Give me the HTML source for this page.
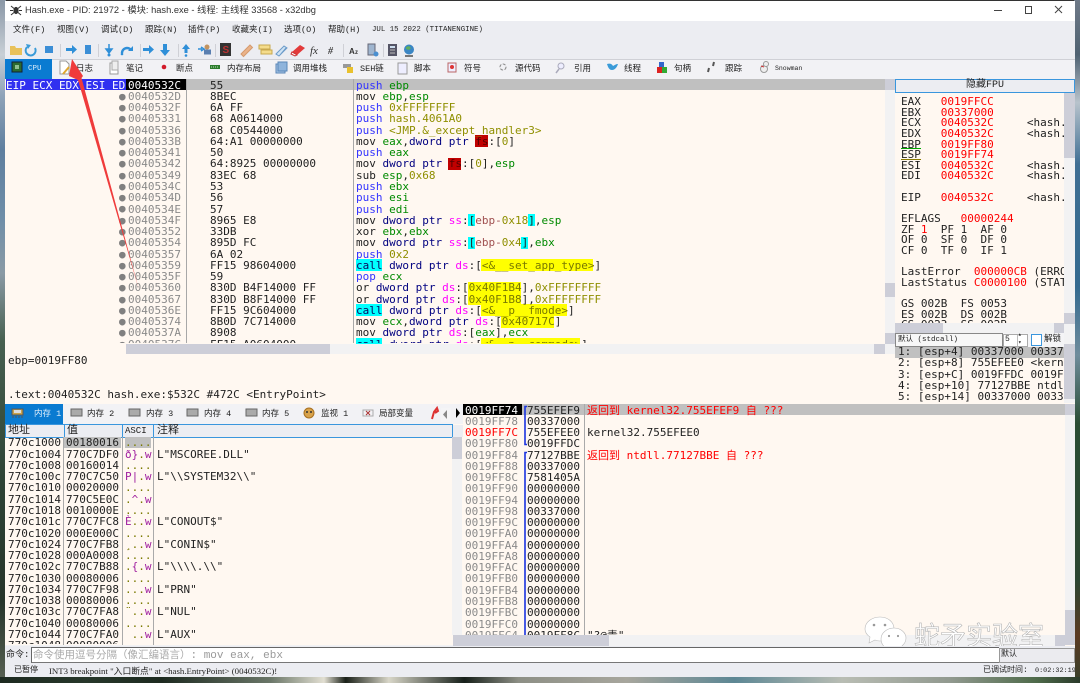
<!DOCTYPE html>
<html><head><meta charset="utf-8"><style>
html,body{margin:0;padding:0}
body{width:1080px;height:683px;position:relative;overflow:hidden;background:#333}
div,pre,span.a{position:absolute}
pre{margin:0;font:11px/11.27px "DejaVu Sans Mono","Liberation Mono",monospace;color:#222;white-space:pre}
.z{font:8.5px/12px "Liberation Mono","WenQuanYi Zen Hei","Noto Sans CJK SC",monospace;color:#222;white-space:pre}
.m{color:#33f}.r{color:#008a00}.h{color:#8f8f00}.n{color:#000080}.s{color:#f0f}.l{color:#999}
.p{color:#a020a0}.o{color:#7a7a00}.e{color:#f00}
.g{background:#c0c0c0}.c{background:#0ff}.y{background:#ff0}.d{background:#c00000}
.t{background:#f2f2f3}.u{background:#cdced8}
</style></head><body>
<!-- wallpaper -->
<div style="left:0;top:0;width:6px;height:683px;background:linear-gradient(#8a97a6 0,#c8cfd6 8%,#8fa3b8 14%,#5f7f9f 22%,#6f8ea8 32%,#8a9aa5 40%,#47604f 50%,#2e4436 70%,#26352a 88%,#5a6355 100%)"></div>
<div style="left:1074px;top:0;width:6px;height:683px;background:linear-gradient(#6f7a88 0,#4f6272 8%,#b8c3cc 15%,#3f6f94 24%,#346a90 42%,#6f8c9c 52%,#2a4d34 62%,#2c4632 85%,#5b3a22 93%,#37402c 100%)"></div>
<div style="left:0;top:677px;width:1080px;height:6px;background:linear-gradient(90deg,#1d2a20 0,#27372a 8%,#1d2a20 15%,#6a7668 25%,#e2dfd2 30%,#1a2018 32%,#d8d6c8 36%,#17201a 43%,#8d8f85 48%,#a7a69d 58%,#5d8794 68%,#b9bdb4 78%,#91998f 88%,#4e6a4a 96%,#2a3a2a 100%)"></div>
<!-- window -->
<div style="left:5px;top:1px;width:1070px;height:676px;background:#fff8f1;overflow:hidden;filter:blur(.3px)">
<div id="w" style="left:-5px;top:-1px;width:1080px;height:683px">
<!-- title -->
<div style="left:5px;top:0;width:1070px;height:21px;background:#fff"></div>
<svg style="position:absolute;left:10px;top:4px" width="12" height="12" viewBox="0 0 12 12"><ellipse cx="6" cy="6.5" rx="2.6" ry="3.6" fill="#333"/><path d="M1 2l3 2.500M11 2L8 4.500M0 6.500h3M12 6.500H9M1 11l3-2.500M11 11L8 8.500" stroke="#333" fill="none"/></svg>
<div style="left:25px;top:4px;font:9.3px/13px 'Liberation Sans','Noto Sans CJK SC',sans-serif;color:#333;white-space:pre">Hash.exe - PID: 21972 - 模块: hash.exe - 线程: 主线程 33568 - x32dbg</div>
<svg style="position:absolute;left:990px;top:3px" width="80" height="14" viewBox="0 0 80 14"><path d="M4 7.500h8" stroke="#444"/><rect x="35.500" y="3.500" width="6" height="7" fill="none" stroke="#444"/><path d="M65 3l7 7M72 3l-7 7" stroke="#444"/></svg>
<!-- menu -->
<div style="left:5px;top:21px;width:1070px;height:20px;background:#ecedf2;border-bottom:1px solid #f5f5f7"></div>
<div class="z" style="left:13px;top:24px">文件(F)</div><div class="z" style="left:57px;top:24px">视图(V)</div><div class="z" style="left:101px;top:24px">调试(D)</div><div class="z" style="left:145px;top:24px">跟踪(N)</div><div class="z" style="left:188px;top:24px">插件(P)</div><div class="z" style="left:232px;top:24px">收藏夹(I)</div><div class="z" style="left:284px;top:24px">选项(O)</div><div class="z" style="left:328px;top:24px">帮助(H)</div>
<div class="z" style="left:372px;top:24px;font-size:7.4px">JUL 15 2022 (TITANENGINE)</div>
<!-- toolbar -->
<div style="left:5px;top:41px;width:1070px;height:18px;background:#ecedf2;border-bottom:1px solid #cfd0d6"></div>
<svg style="position:absolute;left:0;top:40px" width="430" height="20" viewBox="0 0 430 20">
<path d="M10 6h5l1 2h6v7H10z" fill="#e8c15a"/><path d="M27 7a5 5 0 1 0 8 1" stroke="#3a9bd8" stroke-width="2" fill="none"/><path d="M26 4l5 1-3 4z" fill="#3a9bd8"/><rect x="45" y="6" width="8" height="7" fill="#3b8ed6"/>
<path d="M60.500 4v13M98.500 4v13M140.500 4v13M178.500 4v13M215.500 4v13M343.500 4v13M383.500 4v13" stroke="#cfd0d6"/>
<path d="M66 8h6V5l5 4.500-5 4.500v-3h-6z" fill="#2f8fd8"/><rect x="85" y="5" width="6" height="9" fill="#3b8ed6"/>
<path d="M109 4v7M106 9l3 4 3-4z" stroke="#2f8fd8" fill="#2f8fd8" stroke-width="1.500"/><circle cx="109" cy="15" r="1.500" fill="#2f8fd8"/>
<path d="M122 13a5 5 0 0 1 9-3" stroke="#2f8fd8" stroke-width="2.500" fill="none"/><path d="M128 11h5v-5z" fill="#2f8fd8"/><circle cx="122" cy="14" r="1.300" fill="#2f8fd8"/>
<path d="M143 8h6V5l5 4.500-5 4.500v-3h-6z" fill="#2f8fd8"/><path d="M163 4h4v6h3l-5 6-5-6h3z" fill="#2f8fd8"/>
<path d="M186 4l4 5h-2.500v4h-3V9H182z" fill="#2f8fd8"/><circle cx="186" cy="15.500" r="1.300" fill="#2f8fd8"/>
<path d="M198 9h4M201 7l3 2-3 2" stroke="#2f8fd8" stroke-width="1.500" fill="none"/><circle cx="207" cy="7" r="2.500" fill="#c29360"/><rect x="204" y="9.500" width="7" height="5" fill="#5a7fb0"/>
<rect x="220" y="3" width="11" height="13" fill="#333"/><text x="222.500" y="13" font-size="10" font-family="Liberation Sans" font-weight="bold" fill="#b33">S</text>
<path d="M241 14l9-9 2.500 2.500-9 9z" fill="#eab38a" stroke="#d59a6e"/><rect x="259" y="5" width="11" height="4" fill="#f4dc8c" stroke="#c9a94f"/><rect x="261" y="10" width="11" height="4" fill="#f4dc8c" stroke="#c9a94f"/>
<path d="M276 14l8-8 3 2-8 8zM280 15l6-7" fill="#cfe3f4" stroke="#6b9bc9"/><path d="M292 12l8-7 5 3-8 7z" fill="#e23a3a"/><path d="M292 12l5 3-2 1-4-2z" fill="#fff" stroke="#c33"/>
<text x="310" y="14" font-size="11" font-family="Liberation Serif" font-style="italic" fill="#333">fx</text><text x="328" y="14" font-size="10" font-family="Liberation Serif" font-style="italic" font-weight="bold" fill="#444">#</text>
<text x="349" y="14" font-size="8" font-family="Liberation Sans" font-weight="bold" fill="#333">A</text><text x="355" y="14" font-size="6" font-family="Liberation Sans" font-weight="bold" fill="#333">z</text>
<rect x="368" y="4" width="7" height="11" fill="#9fb5cf" stroke="#667"/><circle cx="376" cy="14" r="2.500" fill="#4a8fd0"/>
<rect x="388" y="4" width="9" height="12" fill="#556" /><rect x="390" y="6" width="5" height="2" fill="#cde"/><path d="M390 10h5M390 13h5" stroke="#bbb"/>
<circle cx="409" cy="9.500" r="5" fill="#3b86c4"/><path d="M406 7l3-1 2 2-2 2-3-1z" fill="#5fae5f"/><rect x="405" y="15" width="8" height="2" fill="#777"/>
</svg>
<!-- main tabs -->
<div style="left:5px;top:60px;width:1070px;height:19px;background:#f2f2f5"></div>
<div style="left:5px;top:59px;width:47px;height:20px;background:#0a7bd1"></div>
<svg style="position:absolute;left:0;top:59px" width="800" height="20" viewBox="0 0 800 20">
<rect x="12" y="3" width="10" height="10" fill="#2c6b2f" stroke="#123"/><rect x="15" y="6" width="4" height="4" fill="#8fc08f"/>
<path d="M60 2h6l3 3v10h-9z" fill="#fff" stroke="#999"/><path d="M63 15l6-7" stroke="#e0a830" stroke-width="2"/>
<rect x="110" y="4" width="8" height="11" fill="#fff" stroke="#999"/><rect x="112" y="2" width="6" height="9" fill="#eee" stroke="#aaa"/>
<circle cx="164" cy="8" r="2.300" fill="#d21b2b"/><rect x="210" y="6" width="10" height="4" fill="#2d7d2d"/><path d="M211 8h8" stroke="#bfe3bf" stroke-dasharray="1 1"/>
<rect x="276" y="5" width="9" height="9" fill="#a8c6e6" stroke="#5a87b8"/><rect x="278" y="3" width="9" height="9" fill="#8fb4dc" stroke="#5a87b8"/>
<rect x="343" y="5" width="8" height="4" fill="#999"/><rect x="347" y="8" width="6" height="6" fill="#e9c12d"/>
<rect x="398" y="4" width="9" height="11" fill="#eef" stroke="#999"/>
<rect x="448" y="4" width="8" height="9" fill="#eef" stroke="#b66"/><circle cx="452" cy="8" r="2" fill="#d33"/>
<circle cx="503" cy="8" r="3" fill="none" stroke="#888" stroke-dasharray="3 1.500"/><circle cx="561" cy="7" r="3" fill="#eef" stroke="#aab"/><path d="M559 10l-3 4" stroke="#aab" stroke-width="1.500"/>
<path d="M607 5c3-1 5 0 6 2 2-1 3-2 5-2-1 3-3 6-6 6-3 0-4-3-5-6z" fill="#3a9bd8"/>
<rect x="657" y="8" width="5" height="6" fill="#d22"/><rect x="662" y="8" width="5" height="6" fill="#3a3"/><rect x="659" y="3" width="5" height="5" fill="#36c"/>
<path d="M708 13l1-4M713 7l1-4" stroke="#555" stroke-width="2"/>
<circle cx="764" cy="10" r="3.500" fill="#eee" stroke="#999"/><circle cx="766" cy="5" r="2.500" fill="#eee" stroke="#999"/><path d="M761 7l3 1" stroke="#c33"/>
</svg>
<div class="z" style="left:28px;top:63px;color:#dfeefa;font-size:7.5px">CPU</div>
<div class="z" style="left:76px;top:63px">日志</div><div class="z" style="left:126px;top:63px">笔记</div><div class="z" style="left:176px;top:63px">断点</div><div class="z" style="left:227px;top:63px">内存布局</div><div class="z" style="left:293px;top:63px">调用堆栈</div><div class="z" style="left:360px;top:63px">SEH链</div><div class="z" style="left:414px;top:63px">脚本</div><div class="z" style="left:464px;top:63px">符号</div><div class="z" style="left:515px;top:63px">源代码</div><div class="z" style="left:574px;top:63px">引用</div><div class="z" style="left:624px;top:63px">线程</div><div class="z" style="left:674px;top:63px">句柄</div><div class="z" style="left:725px;top:63px">跟踪</div><div class="z" style="left:775px;top:63px;font-size:6.500px">Snowman</div>
<!-- disasm -->
<div class="g" style="left:186px;top:79px;width:699px;height:11px"></div>
<div style="left:6px;top:79px;width:120px;height:11px;background:#3030f0"></div>
<div style="left:126px;top:79px;width:60px;height:11px;background:#000"></div>
<div style="left:186px;top:79px;width:1px;height:264px;background:#a8a8a8"></div>
<div style="left:353px;top:79px;width:1px;height:264px;background:#a8a8a8"></div>
<pre style="left:6px;top:79.600px;color:#fff;width:120px;overflow:hidden">EIP ECX EDX ESI EDI</pre>
<div class="d" style="left:475px;top:135px;width:13px;height:12px"></div>
<div class="d" style="left:448px;top:158px;width:13px;height:12px"></div>
<div class="c" style="left:468px;top:214px;width:7px;height:12px"></div><div class="c" style="left:528px;top:214px;width:7px;height:12px"></div>
<div class="c" style="left:468px;top:237px;width:7px;height:12px"></div><div class="c" style="left:521px;top:237px;width:7px;height:12px"></div>
<div class="c" style="left:356px;top:259px;width:26px;height:12px"></div><div class="y" style="left:481px;top:259px;width:112px;height:12px"></div>
<div class="y" style="left:468px;top:282px;width:53px;height:12px"></div><div class="y" style="left:468px;top:293px;width:53px;height:12px"></div>
<div class="c" style="left:356px;top:304px;width:26px;height:12px"></div><div class="y" style="left:481px;top:304px;width:86px;height:12px"></div>
<div class="y" style="left:501px;top:316px;width:53px;height:12px"></div>
<div class="c" style="left:356px;top:338px;width:26px;height:12px"></div><div class="y" style="left:481px;top:338px;width:99px;height:12px"></div>
<pre style="left:128px;top:79.600px;color:#8a8a8a;height:263px;overflow:hidden"><span style="color:#fff">0040532C</span>
0040532D
0040532F
00405331
00405336
0040533B
00405341
00405342
00405349
0040534C
0040534D
0040534E
0040534F
00405352
00405354
00405357
00405359
0040535F
00405360
00405367
0040536E
00405374
0040537A
0040537C</pre>
<pre style="left:119px;top:90.800px;color:#808080;height:252px;overflow:hidden">●
●
●
●
●
●
●
●
●
●
●
●
●
●
●
●
●
●
●
●
●
●
●</pre>
<pre style="left:210px;top:79.600px;height:263px;overflow:hidden">55
8BEC
6A FF
68 A0614000
68 C0544000
64:A1 00000000
50
64:8925 00000000
83EC 68
53
56
57
8965 E8
33DB
895D FC
6A 02
FF15 98604000
59
830D B4F14000 FF
830D B8F14000 FF
FF15 9C604000
8B0D 7C714000
8908
FF15 A0604000</pre>
<pre style="left:356px;top:79.600px;height:263px;overflow:hidden"><span class="m">push</span> <span class="r">ebp</span>
mov <span class="r">ebp</span>,<span class="r">esp</span>
<span class="m">push</span> <span class="h">0xFFFFFFFF</span>
<span class="m">push</span> <span class="h">hash.4061A0</span>
<span class="m">push</span> <span class="h">&lt;JMP.&amp;_except_handler3&gt;</span>
mov <span class="r">eax</span>,<span class="n">dword ptr</span> <span style="color:#500">fs</span>:[<span class="h">0</span>]
<span class="m">push</span> <span class="r">eax</span>
mov <span class="n">dword ptr</span> <span style="color:#500">fs</span>:[<span class="h">0</span>],<span class="r">esp</span>
sub <span class="r">esp</span>,<span class="h">0x68</span>
<span class="m">push</span> <span class="r">ebx</span>
<span class="m">push</span> <span class="r">esi</span>
<span class="m">push</span> <span class="r">edi</span>
mov <span class="n">dword ptr</span> <span class="s">ss</span>:[<span style="color:#a05050">ebp-</span><span class="h">0x18</span>],<span class="r">esp</span>
xor <span class="r">ebx</span>,<span class="r">ebx</span>
mov <span class="n">dword ptr</span> <span class="s">ss</span>:[<span style="color:#a05050">ebp-</span><span class="h">0x4</span>],<span class="r">ebx</span>
<span class="m">push</span> <span class="h">0x2</span>
<span style="color:#0a0a60">call</span> <span class="n">dword ptr</span> <span class="s">ds</span>:[<span class="o">&lt;&amp;__set_app_type&gt;</span>]
<span class="m">pop</span> <span class="r">ecx</span>
or <span class="n">dword ptr</span> <span class="s">ds</span>:[<span class="o">0x40F1B4</span>],<span class="h">0xFFFFFFFF</span>
or <span class="n">dword ptr</span> <span class="s">ds</span>:[<span class="o">0x40F1B8</span>],<span class="h">0xFFFFFFFF</span>
<span style="color:#0a0a60">call</span> <span class="n">dword ptr</span> <span class="s">ds</span>:[<span class="o">&lt;&amp;__p__fmode&gt;</span>]
mov <span class="r">ecx</span>,<span class="n">dword ptr</span> <span class="s">ds</span>:[<span class="o">0x40717C</span>]
mov <span class="n">dword ptr</span> <span class="s">ds</span>:[<span class="r">eax</span>],<span class="r">ecx</span>
<span style="color:#0a0a60">call</span> <span class="n">dword ptr</span> <span class="s">ds</span>:[<span class="o">&lt;&amp;__p__commode&gt;</span>]</pre>
<!-- disasm scroll -->
<div class="t" style="left:885px;top:79px;width:10px;height:264px"></div>
<div class="u" style="left:885px;top:283px;width:10px;height:14px"></div>
<div class="u" style="left:885px;top:79px;width:10px;height:11px"></div>
<div class="t" style="left:126px;top:344px;width:769px;height:10px"></div>
<div class="u" style="left:126px;top:344px;width:204px;height:10px"></div>
<div class="u" style="left:874px;top:344px;width:11px;height:10px"></div>
<pre style="left:8px;top:355px">ebp=0019FF80</pre>
<pre style="left:8px;top:389px">.text:0040532C hash.exe:$532C #472C &lt;EntryPoint&gt;</pre>
<!-- registers -->
<div style="left:895px;top:79px;width:180px;height:14px;background:#ecedf2;border:1px solid #3a96dd;box-sizing:border-box"></div>
<div class="z" style="left:895px;top:80px;width:180px;text-align:center;font-size:10px">隐藏FPU</div>
<pre style="left:901px;top:97px;line-height:10.62px;width:163px;height:226px;overflow:hidden">EAX   <span class="e">0019FFCC</span>
EBX   <span class="e">00337000</span>
ECX   <span class="e">0040532C</span>     &lt;hash.EntryPoint&gt;
EDX   <span class="e">0040532C</span>     &lt;hash.EntryPoint&gt;
EBP   <span class="e">0019FF80</span>
ESP   <span class="e">0019FF74</span>
ESI   <span class="e">0040532C</span>     &lt;hash.EntryPoint&gt;
EDI   <span class="e">0040532C</span>     &lt;hash.EntryPoint&gt;

EIP   <span class="e">0040532C</span>     &lt;hash.EntryPoint&gt;

EFLAGS   <span class="e">00000244</span>
ZF <span class="e">1</span>  PF 1  AF 0
OF 0  SF 0  DF 0
CF 0  TF 0  IF 1

LastError  <span class="e">000000CB</span> (ERROR_PROC_NOT_FOUND)
LastStatus <span class="e">C0000100</span> (STATUS_VARIABLE)

GS 002B  FS 0053
ES 002B  DS 002B
CS 0023  SS 002B</pre>
<div style="left:901px;top:148px;width:20px;height:1px;background:#0a0"></div>
<div style="left:901px;top:159px;width:20px;height:1px;background:#8a7a00"></div>
<div class="t" style="left:1064px;top:93px;width:11px;height:251px"></div>
<div class="u" style="left:1064px;top:93px;width:11px;height:65px"></div>
<div class="u" style="left:1064px;top:313px;width:11px;height:11px"></div>
<div class="t" style="left:895px;top:323px;width:169px;height:10px"></div>
<div class="u" style="left:895px;top:323px;width:48px;height:10px"></div>
<div class="u" style="left:1054px;top:323px;width:10px;height:10px"></div>
<div class="u" style="left:885px;top:333px;width:10px;height:11px"></div>
<!-- call combo -->
<div style="left:895px;top:333px;width:169px;height:14px;background:#f4f4f6"></div>
<div style="left:895px;top:333px;width:106px;height:12px;background:#f7f7f7;border:1px solid #888;box-sizing:content-box"></div>
<div class="z" style="left:898px;top:334px;font-size:7.500px">默认 (stdcall)</div>
<div style="left:1003px;top:334px;width:23px;height:11px;background:#fff;border:1px solid #aaa"></div>
<div class="z" style="left:1005px;top:334px;font-size:8px">5</div>
<div style="left:1017px;top:335px;width:1px;height:11px;background:#bbb"></div>
<div class="z" style="left:1018px;top:331px;font-size:6px;line-height:8px">▴
▾</div>
<div style="left:1031px;top:334px;width:9px;height:10px;background:#fff;border:1px solid #3a96dd"></div>
<div class="z" style="left:1044px;top:333px">解锁</div>
<div class="g" style="left:895px;top:347px;width:169px;height:11px"></div>
<pre style="left:898px;top:346px;width:166px;height:57px;overflow:hidden">1: [esp+4] 00337000 00337000
2: [esp+8] 755EFEE0 &lt;kernel32
3: [esp+C] 0019FFDC 0019FFDC
4: [esp+10] 77127BBE ntdll.77
5: [esp+14] 00337000 00337000</pre>
<div class="t" style="left:1064px;top:344px;width:11px;height:59px"></div>
<div class="u" style="left:1064px;top:344px;width:11px;height:55px"></div>
<!-- memory tabs -->
<div style="left:5px;top:404px;width:458px;height:20px;background:#f2f2f5"></div>
<div style="left:5px;top:404px;width:58px;height:20px;background:#0a7bd1"></div>
<svg style="position:absolute;left:0;top:404px" width="463" height="20" viewBox="0 0 463 20">
<g><rect x="12" y="5" width="11" height="6" fill="#c9a24a" stroke="#555"/><rect x="14" y="6" width="7" height="3" fill="#ddd"/><path d="M12 13h11" stroke="#555" stroke-dasharray="2 1"/></g>
<g fill="#aaa" stroke="#666"><rect x="71" y="5" width="11" height="7"/><rect x="129" y="5" width="11" height="7"/><rect x="187" y="5" width="11" height="7"/><rect x="246" y="5" width="11" height="7"/></g>
<circle cx="309" cy="9" r="5" fill="#d8a24a" stroke="#a87020"/><circle cx="307" cy="8" r="1" fill="#333"/><circle cx="311" cy="8" r="1" fill="#333"/>
<rect x="363" y="6" width="10" height="6" fill="none" stroke="#aaa"/><path d="M366 7l4 4M370 7l-4 4" stroke="#a33"/>
<path d="M432 15l2-7 3-4 1 3-3 2" stroke="#d33" stroke-width="2" fill="none"/>
<rect x="441" y="4" width="10" height="14" fill="#f4f4f6"/><path d="M447 6v9l-4-4.500z" fill="#888"/></svg>
<div class="z" style="left:34px;top:408px;color:#dfeefa">内存 1</div><div class="z" style="left:87px;top:408px">内存 2</div><div class="z" style="left:146px;top:408px">内存 3</div><div class="z" style="left:204px;top:408px">内存 4</div><div class="z" style="left:262px;top:408px">内存 5</div><div class="z" style="left:321px;top:408px">监视 1</div><div class="z" style="left:379px;top:408px">局部变量</div>
<!-- memory table -->
<div style="left:5px;top:425px;width:458px;height:12px;background:#ecedf2"></div>
<div style="left:5px;top:424px;width:58px;height:12px;border:1px solid #3a96dd;box-sizing:content-box"></div>
<div style="left:64px;top:424px;width:57px;height:12px;border:1px solid #3a96dd"></div>
<div style="left:122px;top:424px;width:30px;height:12px;border:1px solid #3a96dd"></div>
<div style="left:153px;top:424px;width:298px;height:12px;border:1px solid #3a96dd"></div>
<div class="z" style="left:8px;top:425px;font-size:11px">地址</div><div class="z" style="left:67px;top:425px;font-size:11px">值</div><div class="z" style="left:125px;top:425px;font-size:9px">ASCI</div><div class="z" style="left:157px;top:425px;font-size:11px">注释</div>
<div class="g" style="left:64px;top:437px;width:57px;height:11px"></div>
<div class="g" style="left:125px;top:437px;width:26px;height:11px"></div>
<div style="left:63px;top:437px;width:1px;height:208px;background:#aaa"></div>
<div style="left:122px;top:437px;width:1px;height:208px;background:#aaa"></div>
<div style="left:153px;top:437px;width:1px;height:208px;background:#aaa"></div>
<pre style="left:8px;top:437.400px;height:207px;overflow:hidden">770c1000
770c1004
770c1008
770c100c
770c1010
770c1014
770c1018
770c101c
770c1020
770c1024
770c1028
770c102c
770c1030
770c1034
770c1038
770c103c
770c1040
770c1044
770c1048</pre>
<pre style="left:66px;top:437.400px;height:207px;overflow:hidden">00180016
770C7DF0
00160014
770C7C50
00020000
770C5E0C
0010000E
770C7FC8
000E000C
770C7FB8
000A0008
770C7B88
00080006
770C7F98
00080006
770C7FA8
00080006
770C7FA0
00080006</pre>
<pre style="left:125px;top:437.400px;color:#7a7a00;height:207px;overflow:hidden">....
<span class="p">ð}</span>.<span class="p">w</span>
....
<span class="p">P|</span>.<span class="p">w</span>
....
.<span class="p">^</span>.<span class="p">w</span>
....
<span class="p">È</span>..<span class="p">w</span>
....
¸..<span class="p">w</span>
....
.<span class="p">{</span>.<span class="p">w</span>
....
...<span class="p">w</span>
....
¨..<span class="p">w</span>
....
 ..<span class="p">w</span></pre>
<pre style="left:157px;top:437.400px">

L"MSCOREE.DLL"

L"\\SYSTEM32\\"



L"CONOUT$"

L"CONIN$"

L"\\\\.\\"

L"PRN"

L"NUL"

L"AUX"</pre>
<div class="t" style="left:452px;top:437px;width:10px;height:198px"></div>
<div class="u" style="left:452px;top:437px;width:10px;height:11px"></div>
<div class="u" style="left:452px;top:445px;width:10px;height:14px"></div>
<div class="t" style="left:5px;top:645px;width:458px;height:2px"></div>
<!-- stack -->
<div class="g" style="left:522px;top:404px;width:543px;height:11px"></div>
<div style="left:463px;top:404px;width:59px;height:11px;background:#000"></div>
<div style="left:584px;top:404px;width:1px;height:231px;background:#aaa"></div>
<div style="left:452px;top:404px;width:11px;height:20px;background:#f2f2f5"></div>
<div style="left:456px;top:408px;width:0;height:0;border-left:4px solid #000;border-top:5px solid transparent;border-bottom:5px solid transparent"></div>
<pre style="left:465px;top:404.500px;color:#8a8a8a;height:231px;overflow:hidden"><span style="color:#fff">0019FF74</span>
0019FF78
<span class="e">0019FF7C</span>
0019FF80
0019FF84
0019FF88
0019FF8C
0019FF90
0019FF94
0019FF98
0019FF9C
0019FFA0
0019FFA4
0019FFA8
0019FFAC
0019FFB0
0019FFB4
0019FFB8
0019FFBC
0019FFC0
0019FFC4</pre>
<svg style="position:absolute;left:523px;top:404px" width="5" height="232" viewBox="0 0 5 232"><path d="M4 2.500H2v38h2M4 48.500H2V231" stroke="#1a34e0" stroke-width="1.600" fill="none"/></svg>
<pre style="left:527px;top:404.500px;height:231px;overflow:hidden">755EFEF9
00337000
755EFEE0
0019FFDC
77127BBE
00337000
7581405A
00000000
00000000
00337000
00000000
00000000
00000000
00000000
00000000
00000000
00000000
00000000
00000000
00000000
0019FF8C</pre>
<pre style="left:587px;top:404.500px;height:231px;overflow:hidden;font-family:'DejaVu Sans Mono','Noto Sans CJK SC',monospace"><span class="e">返回到 kernel32.755EFEF9 自 ???</span>

kernel32.755EFEE0

<span class="e">返回到 ntdll.77127BBE 自 ???</span>















"?@青"</pre>
<div class="t" style="left:1065px;top:404px;width:10px;height:241px"></div>
<div class="u" style="left:1065px;top:404px;width:10px;height:11px"></div>
<div class="u" style="left:1065px;top:610px;width:10px;height:23px"></div>
<div class="u" style="left:1065px;top:633px;width:10px;height:12px"></div>
<div class="t" style="left:453px;top:635px;width:612px;height:11px"></div>
<div class="u" style="left:453px;top:635px;width:156px;height:11px"></div>
<div class="u" style="left:1055px;top:635px;width:10px;height:11px"></div>
<!-- watermark -->
<svg style="position:absolute;left:864px;top:615px" width="44" height="42" viewBox="0 0 44 42"><path d="M16 2c8 0 14 5 14 12 0 7-6 12-14 12-2 0-3 0-5-1l-6 3 1-6C3 20 1 17 1 14 1 7 8 2 16 2z" fill="#fff" stroke="#bbb" stroke-width=".6"/><path d="M30 13c7 0 12 5 12 10 0 4-2 6-4 8l1 6-6-3c-1 1-2 1-4 1-7 0-12-5-12-11s6-11 13-11z" fill="#fff" stroke="#bbb" stroke-width=".6"/><circle cx="10" cy="10" r="1.300" fill="#999"/><circle cx="21" cy="10" r="1.300" fill="#999"/><circle cx="25" cy="21" r="1.100" fill="#999"/><circle cx="34" cy="21" r="1.100" fill="#999"/></svg>
<div style="left:914px;top:620px;font:26px/30px 'Noto Sans CJK SC','WenQuanYi Zen Hei',sans-serif;color:#fff;-webkit-text-stroke:.6px #b5b5b5;white-space:pre">蛇矛实验室</div>
<!-- command -->
<div style="left:5px;top:646px;width:1070px;height:31px;background:#ecedf2"></div>
<div class="z" style="left:6px;top:649px;font-size:9px">命令:</div>
<div style="left:31px;top:647px;width:967px;height:14px;background:#fff;border:1px solid #666;border-bottom-color:#777;border-right:0"></div>
<div style="left:33px;top:647px;font:10.500px/15px 'Noto Sans CJK SC','WenQuanYi Zen Hei',sans-serif;color:#aaa;white-space:pre">命令使用逗号分隔（像汇编语言）<span style="font:11px 'Liberation Mono',monospace;color:#999">: mov eax, ebx</span></div>
<div style="left:999px;top:648px;width:74px;height:13px;background:#ebebef;border:1px solid #999"></div>
<div class="z" style="left:1001px;top:649px;font-size:8px">默认</div>
<div class="z" style="left:14px;top:665px;font-size:8px">已暂停</div>
<div class="z" style="left:49px;top:665px;font:8.800px/12px 'Liberation Serif','WenQuanYi Zen Hei',serif">INT3 breakpoint "入口断点" at &lt;hash.EntryPoint&gt; (0040532C)!</div>
<div class="z" style="left:983px;top:665px;font-size:8px">已调试时间:</div>
<div class="z" style="left:1035px;top:665px;font-size:6.800px">0:02:32:19</div>
</div></div>
<!-- red arrow -->
<svg style="position:absolute;left:0;top:0" width="1080" height="683"><path d="M72 59L83 76 81.500 78 139 290 78 80 69 76z" fill="#ef3b3b"/></svg>
</body></html>
